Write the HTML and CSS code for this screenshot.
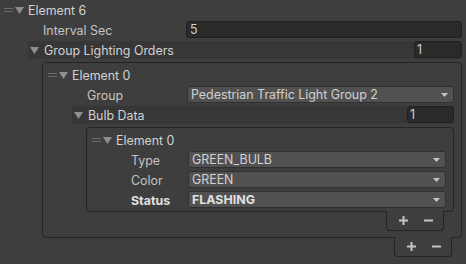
FILE: index.html
```html
<html>
<head>
    <link rel="stylesheet" href="styles.css">
</head>
<body>
    <div class="inspector">
        <div class="row item item-top">
            <span class="handle"></span>
            <svg class="fold" width="9" height="7" viewBox="0 0 9 7"><path d="M0 0H9L4.5 7Z" /></svg>
            <span class="name">Element 6</span>
        </div>
        <div class="row">
            <span class="label lbl-top">Interval Sec</span>
            <span class="field input">5</span>
        </div>
        <div class="row section sec-top">
            <svg class="fold" width="9" height="7" viewBox="0 0 9 7"><path d="M0 0H9L4.5 7Z" /></svg>
            <span class="label">Group Lighting Orders</span>
            <span class="field input count">1</span>
        </div>

        <div class="list list-outer">
            <div class="box">
                <div class="row item">
                    <span class="handle"></span>
                    <svg class="fold" width="9" height="7" viewBox="0 0 9 7"><path d="M0 0H9L4.5 7Z" /></svg>
                    <span class="name">Element 0</span>
                </div>
                <div class="row">
                    <span class="label lbl-group">Group</span>
                    <span class="field popup">Pedestrian Traffic Light Group 2
                        <svg class="arrow" width="7" height="4" viewBox="0 0 7 4"><path d="M0 0H7L3.5 4Z" /></svg>
                    </span>
                </div>
                <div class="row section sec-bulb">
                    <svg class="fold" width="9" height="7" viewBox="0 0 9 7"><path d="M0 0H9L4.5 7Z" /></svg>
                    <span class="label">Bulb Data</span>
                    <span class="field input count">1</span>
                </div>

                <div class="list list-inner">
                    <div class="box">
                        <div class="row item">
                            <span class="handle"></span>
                            <svg class="fold" width="9" height="7" viewBox="0 0 9 7"><path d="M0 0H9L4.5 7Z" /></svg>
                            <span class="name">Element 0</span>
                        </div>
                        <div class="row">
                            <span class="label lbl-bulb">Type</span>
                            <span class="field popup">GREEN_BULB
                                <svg class="arrow" width="7" height="4" viewBox="0 0 7 4"><path d="M0 0H7L3.5 4Z" /></svg>
                            </span>
                        </div>
                        <div class="row">
                            <span class="label lbl-bulb">Color</span>
                            <span class="field popup">GREEN
                                <svg class="arrow" width="7" height="4" viewBox="0 0 7 4"><path d="M0 0H7L3.5 4Z" /></svg>
                            </span>
                        </div>
                        <div class="row changed">
                            <span class="label lbl-bulb">Status</span>
                            <span class="field popup">FLASHING
                                <svg class="arrow" width="7" height="4" viewBox="0 0 7 4"><path d="M0 0H7L3.5 4Z" /></svg>
                            </span>
                        </div>
                    </div>
                    <div class="footer">
                        <span class="btn"><svg width="9" height="9" viewBox="0 0 9 9"><path d="M0 3.5H9V5.5H0ZM3.5 0H5.5V9H3.5Z" /></svg></span>
                        <span class="btn"><svg width="9" height="9" viewBox="0 0 9 9"><path d="M0 3.5H9V5.5H0Z" /></svg></span>
                    </div>
                </div>
            </div>
            <div class="footer">
                <span class="btn"><svg width="9" height="9" viewBox="0 0 9 9"><path d="M0 3.5H9V5.5H0ZM3.5 0H5.5V9H3.5Z" /></svg></span>
                <span class="btn"><svg width="9" height="9" viewBox="0 0 9 9"><path d="M0 3.5H9V5.5H0Z" /></svg></span>
            </div>
        </div>
    </div>
</body>
</html>
```

FILE: styles.css
```css
body {
    margin: 0;
    background-color: #3e3e3e;
    font-family: Inter, "Noto Sans", sans-serif;
    font-size: 12.4px;
    color: #c4c4c4;
}

.inspector {
    display: flex;
    flex-direction: column;
    gap: 2px;
    width: 462px;
    padding-top: 1px;
}

.row {
    display: flex;
    align-items: center;
    height: 18px;
    white-space: nowrap;
}

/* drag handle and foldout arrow */
.handle {
    width: 9px;
    height: 4px;
    margin-right: 2px;
    box-sizing: border-box;
    border-top: 1px solid #6a6a6a;
    border-bottom: 1px solid #6a6a6a;
}
.fold {
    fill: #8e8e8e;
    flex: none;
}
.item .name {
    margin-left: 4px;
    color: #d2d2d2;
}
.item-top {
    padding-left: 4px;
}

.label {
    box-sizing: border-box;
    flex: none;
}
.lbl-top {
    width: 186px;
    padding-left: 43px;
}
.lbl-group {
    width: 139px;
    padding-left: 39px;
}
.lbl-bulb {
    width: 96px;
    padding-left: 39px;
}

/* foldout headers */
.section {
    background-color: #373737;
    padding-left: 2px;
}
.section .label {
    margin-left: 5px;
    color: #d2d2d2;
}
.sec-top {
    margin-left: 28px;
}
.sec-bulb {
    margin-left: 24px;
}

/* value fields */
.field {
    box-sizing: border-box;
    display: flex;
    align-items: center;
    flex: 1;
    height: 17px;
    align-self: flex-start;
    border-radius: 3px;
    color: #d2d2d2;
}
.input {
    background-color: #2a2a2a;
    border: 1px solid #212121;
    padding-left: 3px;
}
.count {
    flex: none;
    width: 48px;
    margin-left: auto;
    padding-left: 2px;
}
.sec-bulb .count {
    width: 47px;
}
.popup {
    background-color: #515151;
    border: 1px solid #303030;
    padding-left: 3px;
}
.arrow {
    fill: #c4c4c4;
    margin-left: auto;
    margin-right: 5px;
}
.changed .label,
.changed .field {
    font-weight: bold;
    color: #e0e0e0;
}

/* reorderable lists */
.list {
    display: flex;
    flex-direction: column;
}
.box {
    display: flex;
    flex-direction: column;
    gap: 2px;
    border: 1px solid #242424;
    border-radius: 4px;
    padding: 3px 7px 2px 5px;
}
.list-outer {
    margin-left: 42px;
    margin-top: 1px;
}
.list-outer > .box {
    padding-bottom: 6px;
}
.list-inner {
    margin-left: 38px;
    margin-top: 1px;
}
.footer {
    display: flex;
    align-self: flex-end;
    box-sizing: border-box;
    width: 58px;
    height: 20px;
    margin-top: -1px;
    margin-right: 10px;
    padding-left: 4px;
    background-color: #3e3e3e;
    border: 1px solid #242424;
    border-top: none;
    border-radius: 0 0 4px 4px;
}
.btn {
    display: flex;
    align-items: center;
    justify-content: center;
    width: 25px;
    fill: #c4c4c4;
}
```
